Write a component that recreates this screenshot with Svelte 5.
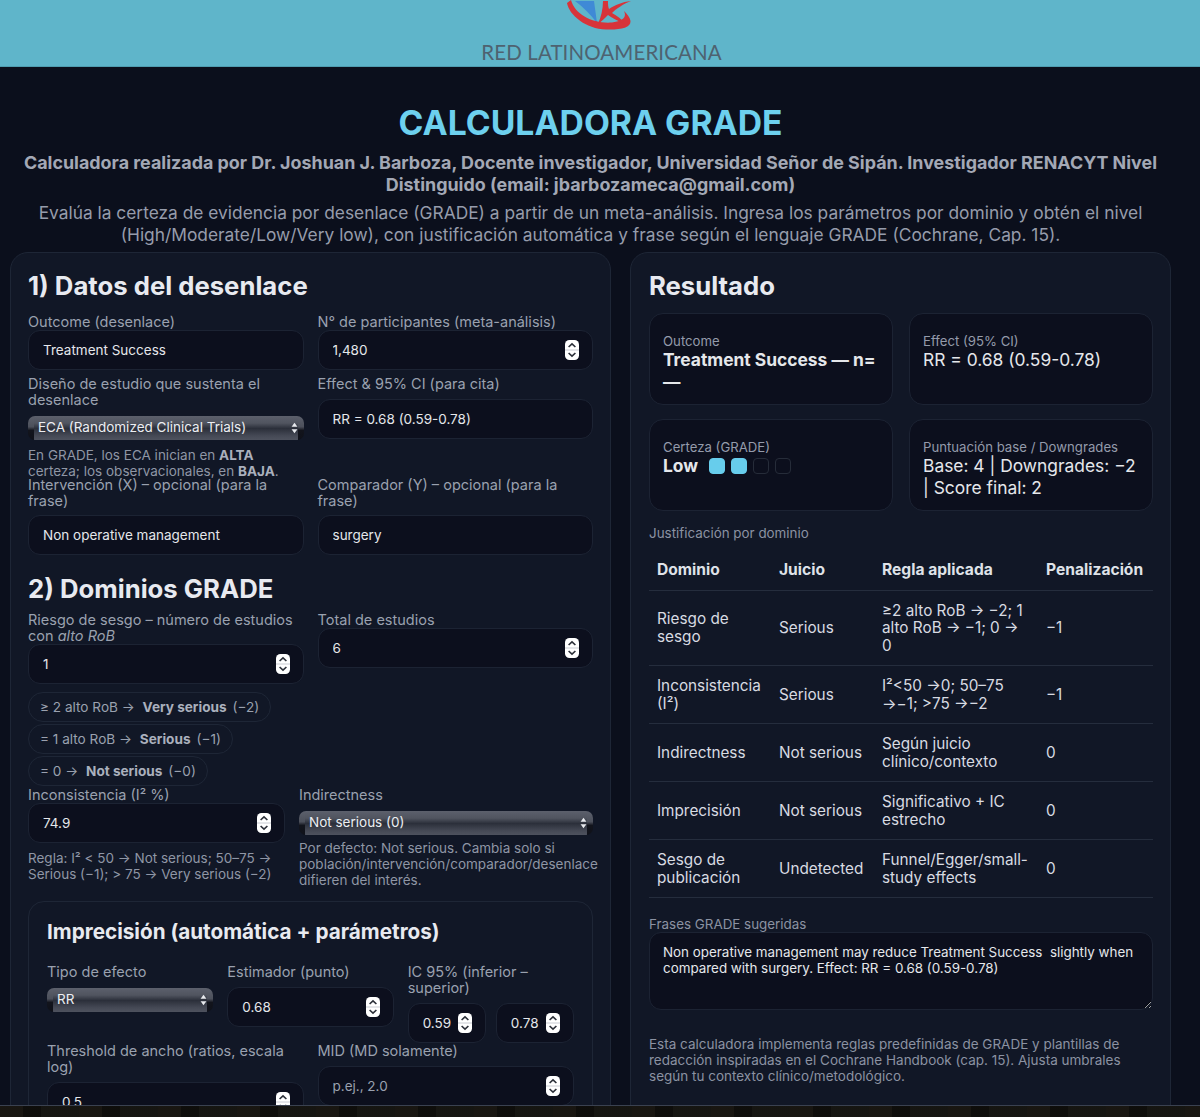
<script>
	const chips = [
		{ pre: '≥ 2 alto RoB →', tag: 'Very serious', post: '(−2)' },
		{ pre: '= 1 alto RoB →', tag: 'Serious', post: '(−1)' },
		{ pre: '= 0 →', tag: 'Not serious', post: '(−0)' }
	];

	const rows = [
		['Riesgo de sesgo', 'Serious', '≥2 alto RoB → −2; 1 alto RoB → −1; 0 → 0', '−1'],
		['Inconsistencia (I²)', 'Serious', 'I²<50 →0; 50–75 →−1; >75 →−2', '−1'],
		['Indirectness', 'Not serious', 'Según juicio clínico/contexto', '0'],
		['Imprecisión', 'Not serious', 'Significativo + IC estrecho', '0'],
		['Sesgo de publicación', 'Undetected', 'Funnel/Egger/small-study effects', '0']
	];

	// certainty level: 2 of 4 squares lit for "Low"
	const dots = [true, true, false, false];

	const phrase =
		'Non operative management may reduce Treatment Success  slightly when compared with surgery. Effect: RR = 0.68 (0.59-0.78)';
</script>

{#snippet spinner()}
	<svg class="spinner" viewBox="0 0 14 20" width="14" height="20" aria-hidden="true">
		<rect width="14" height="20" rx="4.5" fill="#fff" />
		<line x1="0" y1="10" x2="14" y2="10" stroke="#c9ccd3" stroke-width="1" />
		<polyline points="3.6,7 7,3.8 10.4,7" fill="none" stroke="#2b2f38" stroke-width="1.6" />
		<polyline points="3.6,13 7,16.2 10.4,13" fill="none" stroke="#2b2f38" stroke-width="1.6" />
	</svg>
{/snippet}

{#snippet numberBox(value, placeholder)}
	<div class="box">
		<input type="text" {value} {placeholder} />
		{@render spinner()}
	</div>
{/snippet}

{#snippet nativeSelect(text)}
	<div class="select-wrap">
		<select>
			<option>{text}</option>
		</select>
		<svg class="select-arrows" viewBox="0 0 8 14" width="7" height="12" aria-hidden="true">
			<polygon points="4,1 7.4,5.6 0.6,5.6" fill="#e8eaee" />
			<polygon points="4,13 7.4,8.4 0.6,8.4" fill="#e8eaee" />
		</svg>
	</div>
{/snippet}

<div class="page">
	<header class="banner">
		<svg class="logo" viewBox="0 0 66 30" width="66" height="30" aria-hidden="true">
			<path d="M9 1 L28 1 L31 23 C25 15 17 7 9 1 Z" fill="#3f8ad6" />
			<path d="M1 3 C3 15 20 29 40 29.5 C54 30 65 28 64.5 21 C64 17 61 14 58 11 C61 17 57 21 46 22.5 C28 24 9 15 5 0 Z" fill="#d7343a" />
			<path d="M37 1 L42 1 C42 4 42 7 43 9 C49 5 56 2 65 1 C57 4 50 9 46 13 C51 16 56 19 59 24 C52 21 46 18 42 15 C39 18 36 21 32 24 C35 17 37 9 37 1 Z" fill="#d7343a" />
		</svg>
		<span class="brand">RED LATINOAMERICANA</span>
	</header>

	<main class="content">
		<div class="hero">
			<h1>CALCULADORA GRADE</h1>
			<p class="credit">
				Calculadora realizada por Dr. Joshuan J. Barboza, Docente investigador, Universidad Señor de
				Sipán. Investigador RENACYT Nivel Distinguido (email: jbarbozameca@gmail.com)
			</p>
			<p class="intro">
				Evalúa la certeza de evidencia por desenlace (GRADE) a partir de un meta-análisis. Ingresa los
				parámetros por dominio y obtén el nivel (High/Moderate/Low/Very low), con justificación
				automática y frase según el lenguaje GRADE (Cochrane, Cap. 15).
			</p>
		</div>

		<div class="columns">
			<section class="panel left">
				<h2>1) Datos del desenlace</h2>
				<div class="grid2 first">
					<div class="field">
						<label for="outcome">Outcome (desenlace)</label>
						<div class="box"><input id="outcome" type="text" value="Treatment Success" /></div>
					</div>
					<div class="field">
						<span class="label">N° de participantes (meta-análisis)</span>
						{@render numberBox('1,480')}
					</div>
					<div class="field">
						<span class="label wide">Diseño de estudio que sustenta el desenlace</span>
						{@render nativeSelect('ECA (Randomized Clinical Trials)')}
						<p class="hint tight">
							En GRADE, los ECA inician en <b>ALTA</b> certeza; los observacionales, en <b>BAJA</b>.
						</p>
					</div>
					<div class="field">
						<span class="label wide">Effect &amp; 95% CI (para cita)</span>
						<div class="box"><input type="text" value="RR = 0.68 (0.59-0.78)" /></div>
					</div>
					<div class="field flush">
						<span class="label wide">Intervención (X) – opcional (para la frase)</span>
						<div class="box"><input type="text" value="Non operative management" /></div>
					</div>
					<div class="field flush">
						<span class="label wide">Comparador (Y) – opcional (para la frase)</span>
						<div class="box"><input type="text" value="surgery" /></div>
					</div>
				</div>

				<h2 class="second">2) Dominios GRADE</h2>
				<div class="grid2">
					<div class="field">
						<span class="label">Riesgo de sesgo – número de estudios con <i>alto RoB</i></span>
						{@render numberBox('1')}
						<div class="chips">
							{#each chips as chip}
								<span class="chip">{chip.pre} <b>{chip.tag}</b> <span class="chip-post">{chip.post}</span></span>
							{/each}
						</div>
					</div>
					<div class="field">
						<span class="label">Total de estudios</span>
						{@render numberBox('6')}
					</div>
				</div>

				<div class="grid-auto">
					<div class="field">
						<span class="label">Inconsistencia (I² %)</span>
						{@render numberBox('74.9')}
						<p class="hint">Regla: I² &lt; 50 → Not serious; 50–75 → Serious (−1); &gt; 75 → Very serious (−2)</p>
					</div>
					<div class="field">
						<span class="label">Indirectness</span>
						{@render nativeSelect('Not serious (0)')}
						<p class="hint near">
							Por defecto: Not serious. Cambia solo si población/intervención/comparador/desenlace
							difieren del interés.
						</p>
					</div>
				</div>

				<div class="subcard">
					<h3>Imprecisión (automática + parámetros)</h3>
					<div class="grid3">
						<div class="field">
							<span class="label">Tipo de efecto</span>
							{@render nativeSelect('RR')}
						</div>
						<div class="field">
							<span class="label wide">Estimador (punto)</span>
							{@render numberBox('0.68')}
						</div>
						<div class="field">
							<span class="label wide">IC 95% (inferior – superior)</span>
							<div class="pair">
								{@render numberBox('0.59')}
								{@render numberBox('0.78')}
							</div>
						</div>
					</div>
					<div class="grid2 last">
						<div class="field">
							<span class="label wide">Threshold de ancho (ratios, escala log)</span>
							{@render numberBox('0.5')}
						</div>
						<div class="field">
							<span class="label wide">MID (MD solamente)</span>
							{@render numberBox('', 'p.ej., 2.0')}
						</div>
					</div>
				</div>
			</section>

			<section class="panel right">
				<h2>Resultado</h2>
				<div class="kpis">
					<div class="kpi">
						<span class="kpi-label">Outcome</span>
						<strong class="kpi-value">Treatment Success — n= —</strong>
					</div>
					<div class="kpi">
						<span class="kpi-label">Effect (95% CI)</span>
						<span class="kpi-value">RR = 0.68 (0.59-0.78)</span>
					</div>
					<div class="kpi">
						<span class="kpi-label">Certeza (GRADE)</span>
						<div class="certainty">
							<strong class="kpi-value">Low</strong>
							<div class="dots">
								{#each dots as on}
									<span class="dot" class:on></span>
								{/each}
							</div>
						</div>
					</div>
					<div class="kpi">
						<span class="kpi-label">Puntuación base / Downgrades</span>
						<span class="kpi-value">Base: 4 | Downgrades: −2 | Score final: 2</span>
					</div>
				</div>

				<p class="caption">Justificación por dominio</p>
				<table>
					<thead>
						<tr>
							<th>Dominio</th>
							<th>Juicio</th>
							<th>Regla aplicada</th>
							<th>Penalización</th>
						</tr>
					</thead>
					<tbody>
						{#each rows as row}
							<tr>
								{#each row as cell}
									<td>{cell}</td>
								{/each}
							</tr>
						{/each}
					</tbody>
				</table>

				<p class="caption phrases">Frases GRADE sugeridas</p>
				<textarea value={phrase}></textarea>

				<p class="note">
					Esta calculadora implementa reglas predefinidas de GRADE y plantillas de redacción inspiradas
					en el Cochrane Handbook (cap. 15). Ajusta umbrales según tu contexto clínico/metodológico.
				</p>
			</section>
		</div>
	</main>
	<div class="photo-strip"></div>
</div>

<style>
	:global(body) {
		margin: 0;
		background: #0b0f1c;
		overflow: hidden;
	}

	.page {
		height: 1117px;
		display: flex;
		flex-direction: column;
		overflow: hidden;
		font-family: Inter, 'Liberation Sans', sans-serif;
		color: #e5e7eb;
	}

	.banner {
		height: 66px;
		flex: none;
		background: #5fb5ca;
		border-bottom: 1px solid #4f9db0;
		display: flex;
		flex-direction: column;
		align-items: center;
		overflow: hidden;
	}

	.logo {
		flex: none;
		margin-left: -2px;
		filter: blur(0.3px);
	}

	.brand {
		margin: 11px 0 0 3px;
		font-family: Lato, 'Open Sans', sans-serif;
		font-size: 20.5px;
		line-height: 22px;
		color: #4e6270;
		white-space: nowrap;
		letter-spacing: 0.1px;
	}

	.content {
		flex: 1;
		min-height: 0;
		overflow: hidden;
		background: #0b0f1c;
		padding: 0 29px 0 10px;
	}

	.hero {
		text-align: center;
		padding: 34px 0 0;
	}

	h1 {
		margin: 0;
		font-size: 33.7px;
		line-height: 44px;
		font-weight: 700;
		color: #6dd0ee;
	}

	.credit {
		margin: 7px 0 0;
		font-size: 17.9px;
		line-height: 21.5px;
		font-weight: 700;
		color: #a3a8b5;
	}

	.intro {
		margin: 7px 0 0;
		font-size: 17.35px;
		line-height: 21.5px;
		color: #969cab;
	}

	.columns {
		display: grid;
		grid-template-columns: 601px 541px;
		column-gap: 19px;
		margin-top: 7px;
	}

	.panel {
		background: #111726;
		border: 1px solid #1e2636;
		border-radius: 18px;
		padding: 17px;
		height: 1000px;
		box-sizing: border-box;
	}

	.panel.right {
		padding-left: 18px;
	}

	h2 {
		margin: 0;
		font-size: 25.7px;
		line-height: 32px;
		font-weight: 700;
		color: #e8eaf0;
	}

	h2.second {
		margin-top: 18px;
	}

	.grid2 {
		display: grid;
		grid-template-columns: 1fr 1fr;
		column-gap: 14px;
		row-gap: 7px;
		align-items: start;
		margin-top: 7px;
	}

	.grid2.first {
		margin-top: 12px;
		row-gap: 6px;
	}

	.grid-auto {
		display: grid;
		grid-template-columns: 257px 294px;
		column-gap: 14px;
		margin-top: 1px;
	}

	.label,
	label {
		display: block;
		font-size: 14.5px;
		line-height: 16px;
		color: #9aa1af;
	}

	.label.wide {
		margin-bottom: 7px;
	}

	.flush {
		margin-top: -8px;
	}

	.flush .label.wide {
		margin-bottom: 6px;
	}

	.box {
		display: flex;
		align-items: center;
		box-sizing: border-box;
		height: 40px;
		padding: 0 13px 0 14px;
		background: #0c0f1d;
		border: 1px solid #1c2333;
		border-radius: 12px;
	}

	input {
		flex: 1;
		min-width: 0;
		width: 100%;
		padding: 0;
		border: 0;
		outline: 0;
		background: transparent;
		font: inherit;
		font-size: 13.5px;
		color: #e5e7eb;
	}

	input::placeholder {
		color: #9aa1af;
		opacity: 1;
	}

	.spinner {
		flex: none;
	}

	.select-wrap {
		position: relative;
		height: 24px;
		margin-top: 8px;
	}

	.select-wrap select {
		display: block;
		width: 100%;
		height: 24px;
		padding: 0 20px 3px 10px;
		appearance: none;
		border: 0;
		outline: 0;
		border-radius: 7px;
		font: inherit;
		font-size: 13.5px;
		color: #eceef2;
		background:
			linear-gradient(180deg, #5c606c 0%, #50545f 30%, #2b2f3a 52%, #454955 82%, #4e525e 100%) no-repeat 6px 0 / calc(100% - 12px) 100%,
			linear-gradient(180deg, #5c606c 0%, #4c505b 45%, #12141c 60%, #0f1119 100%);
	}

	.select-arrows {
		position: absolute;
		right: 6px;
		top: 6px;
		pointer-events: none;
	}

	.hint {
		margin: 7px 0 0;
		font-size: 13.5px;
		line-height: 16px;
		color: #8f96a5;
	}

	.hint.near {
		margin-top: 5px;
	}

	.hint b {
		color: #aab0bd;
		font-weight: 700;
	}

	.chips {
		display: flex;
		flex-direction: column;
		align-items: flex-start;
		gap: 2px;
		margin: 8px 0 0;
	}

	.chip {
		box-sizing: border-box;
		height: 30px;
		display: inline-flex;
		align-items: center;
		gap: 4px;
		padding: 0 11px;
		border: 1px solid #1e2636;
		border-radius: 999px;
		font-size: 13.6px;
		color: #9aa1af;
		white-space: pre;
	}

	.chip b {
		color: #aab0bd;
	}

	.chip-post {
		margin-left: 2px;
	}

	.subcard {
		margin-top: 13px;
		padding: 17px 18px 18px;
		border: 1px solid #1e2636;
		border-radius: 16px;
	}

	h3 {
		margin: 0;
		font-size: 20.7px;
		line-height: 26px;
		font-weight: 700;
		color: #e8eaf0;
	}

	.grid3 {
		display: grid;
		grid-template-columns: repeat(3, 1fr);
		column-gap: 14px;
		margin-top: 19px;
		align-items: start;
	}

	.pair {
		display: flex;
		gap: 10px;
	}

	.pair .box {
		flex: 1;
		min-width: 0;
	}

	.grid2.last {
		margin-top: 0;
	}

	.kpis {
		display: grid;
		grid-template-columns: 1fr 1fr;
		gap: 14px 16px;
		margin-top: 11px;
	}

	.kpi {
		box-sizing: border-box;
		height: 92px;
		padding: 19px 8px 18px 13px;
		background: #0c0f1d;
		border: 1px solid #1c2333;
		border-radius: 14px;
	}

	.kpi-label {
		display: block;
		font-size: 13.2px;
		line-height: 16px;
		color: #949bab;
	}

	.kpi-value {
		display: block;
		font-size: 17.4px;
		line-height: 22px;
		color: #e5e7eb;
	}

	strong.kpi-value {
		font-weight: 700;
	}

	.certainty {
		display: flex;
		align-items: center;
		gap: 11px;
	}

	.dots {
		display: flex;
		gap: 6px;
	}

	.dot {
		box-sizing: border-box;
		width: 16px;
		height: 16px;
		border-radius: 4px;
		border: 1px solid #262c39;
	}

	.dot.on {
		background: #67cdec;
		border-color: #67cdec;
	}

	.caption {
		margin: 14px 0 0;
		font-size: 13.4px;
		line-height: 16px;
		color: #8b92a2;
	}

	.caption.phrases {
		margin-top: 18px;
	}

	table {
		width: 100%;
		margin-top: 8px;
		border-collapse: collapse;
		table-layout: fixed;
		font-size: 15.3px;
		line-height: 17.5px;
	}

	th {
		padding: 12px 8px 11px;
		text-align: left;
		font-size: 15.6px;
		font-weight: 700;
		color: #dfe2e8;
		border-bottom: 1px solid #252d3d;
	}

	th:nth-child(1) {
		width: 106px;
	}

	th:nth-child(2) {
		width: 87px;
	}

	th:nth-child(3) {
		width: 148px;
	}

	td {
		padding: 11px 8px;
		color: #d8dbe2;
		border-bottom: 1px solid #252d3d;
		vertical-align: middle;
	}

	textarea {
		display: block;
		box-sizing: border-box;
		width: 100%;
		height: 78px;
		padding: 11px 13px;
		background: #0c0f1d;
		border: 1px solid #1c2333;
		border-radius: 12px;
		outline: 0;
		font: inherit;
		font-size: 13.4px;
		line-height: 16px;
		color: #e5e7eb;
	}

	.note {
		margin: 26px 0 0;
		font-size: 13.5px;
		line-height: 16px;
		color: #8b92a2;
	}

	.photo-strip {
		height: 12px;
		flex: none;
		box-sizing: border-box;
		border-top: 1px solid #3a4150;
		background:
			repeating-linear-gradient(90deg, rgba(50, 40, 30, 0.18) 0 23px, rgba(0, 0, 0, 0.25) 23px 41px, rgba(36, 38, 32, 0.16) 41px 79px),
			#13120f;
	}
</style>
